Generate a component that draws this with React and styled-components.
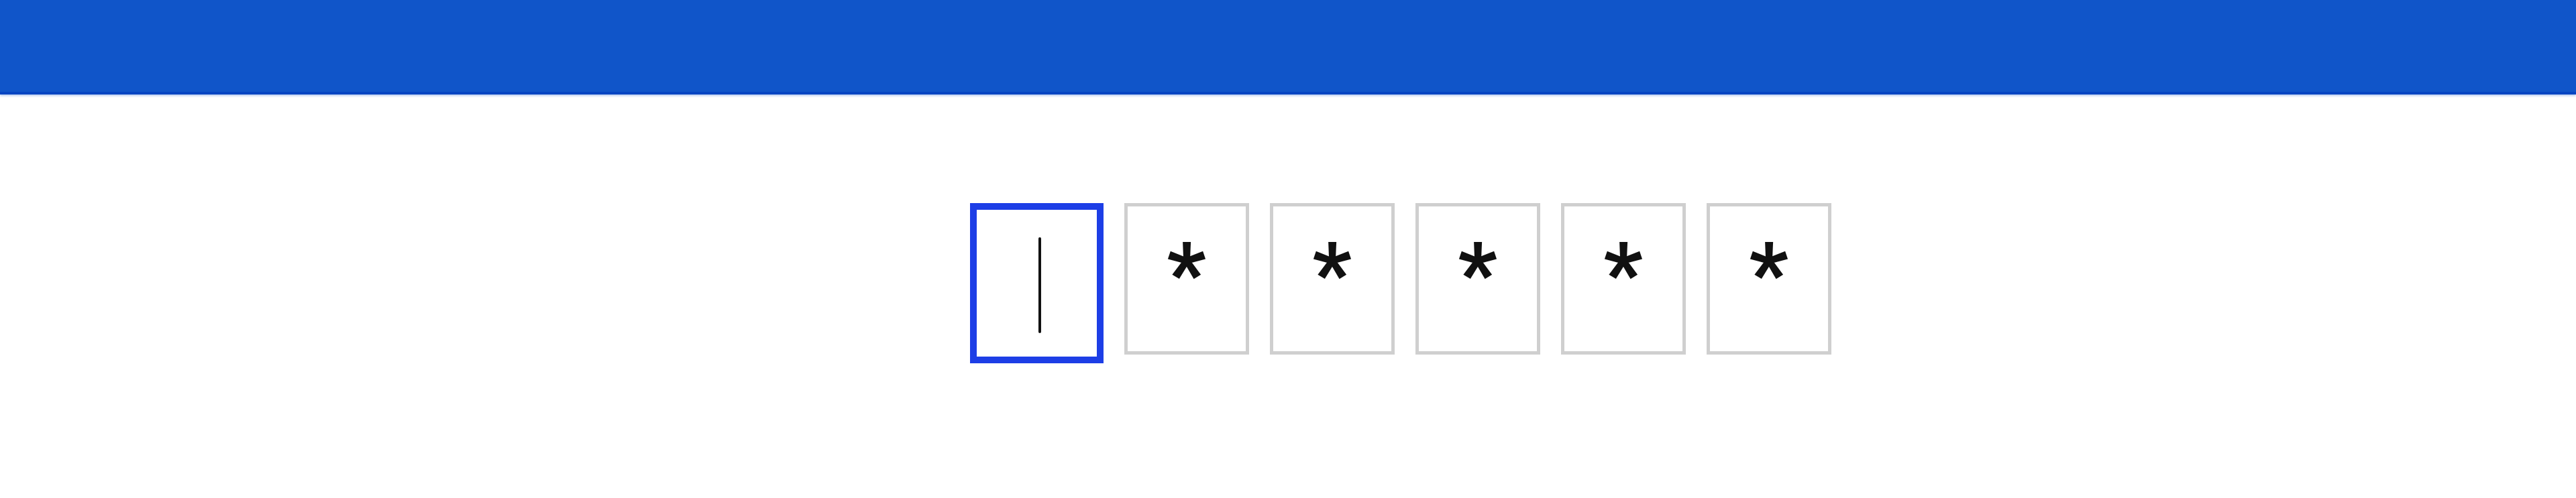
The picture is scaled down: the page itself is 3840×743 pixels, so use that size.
import React from 'react';
import styled, { createGlobalStyle } from 'styled-components';

const GlobalStyle = createGlobalStyle`
  html, body {
    margin: 0;
    padding: 0;
    background: #ffffff;
    font-family: "Liberation Sans", Arial, sans-serif;
  }
`;

const Page = styled.div`
  min-height: 743px;
  background: #ffffff;
`;

const TopBar = styled.header`
  height: 137px;
  background: #1055c9;
  border-bottom: 4px solid #0645c2;
  box-shadow: 0 2px 3px rgba(16, 85, 201, 0.3);
`;

const CodeRow = styled.div`
  display: flex;
  justify-content: center;
  align-items: flex-start;
  gap: 31px;
  padding: 162px 0 0 336px;
`;

const Cell = styled.div`
  box-sizing: border-box;
  display: flex;
  flex-direction: column;
  align-items: center;
  width: ${({ $active }) => ($active ? '199px' : '186px')};
  height: ${({ $active }) => ($active ? '239px' : '226px')};
  border: ${({ $active }) => ($active ? '10px solid #1d3ee6' : '5px solid #cfcfcf')};
  background: #ffffff;
`;

const Mask = styled.span`
  margin-top: 31px;
  font-family: "Liberation Sans", Arial, sans-serif;
  font-size: 150px;
  line-height: 1;
  color: #111111;
  -webkit-text-stroke: 2px #111111;
`;

const Caret = styled.span`
  display: block;
  width: 4px;
  height: 143px;
  margin: 41px 0 0 8px;
  border-radius: 2px;
  background: #111111;
`;

const digits = ['', '*', '*', '*', '*', '*'];

export default function App() {
  return (
    <Page>
      <GlobalStyle />
      <TopBar />
      <CodeRow>
        {digits.map((d, i) => (
          <Cell key={i} $active={i === 0}>
            {i === 0 ? <Caret /> : <Mask>{d}</Mask>}
          </Cell>
        ))}
      </CodeRow>
    </Page>
  );
}
